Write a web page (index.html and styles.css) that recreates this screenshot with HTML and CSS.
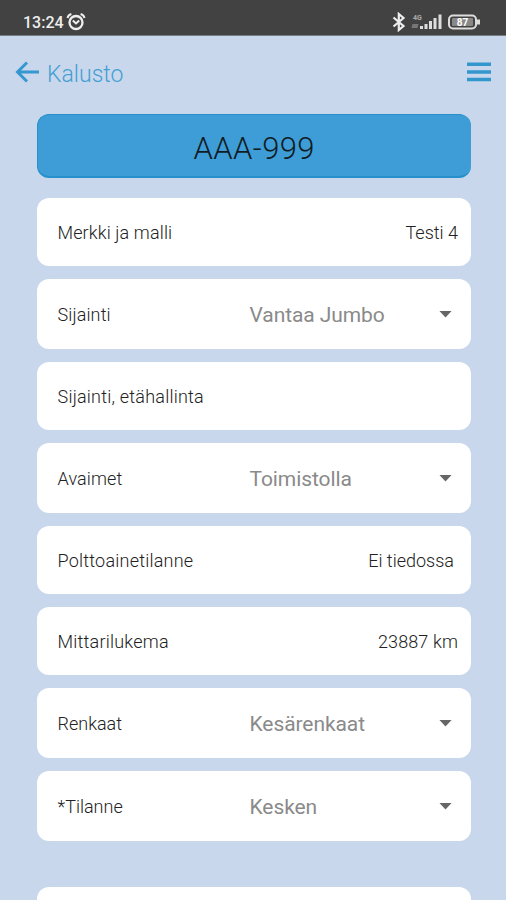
FILE: index.html
```html
<!DOCTYPE html>
<html lang="fi">
<head>
<meta charset="utf-8">
<title>Kalusto</title>
<link rel="stylesheet" href="styles.css">
</head>
<body>
<header class="status">
  <div class="clock"><span>13:24</span>
    <svg width="20" height="20" viewBox="0 0 20 20" fill="none" stroke="#eee"><circle cx="10" cy="10.5" r="6.5" stroke-width="2.300"/><path d="M1.500 6Q2 3 5.400 2M14.600 2Q18 3 18.500 6" stroke-width="2"/><path d="M6.800 8.500L10 11.500l3.200-3" stroke-width="2"/></svg>
  </div>
  <div class="indicators">
    <svg class="bluetooth" width="14" height="20" viewBox="0 0 14 20" fill="none" stroke="#eee" stroke-width="2.200"><path d="M1.500 5.500l10 8.500-4.700 4V2l4.700 4-10 8.500"/></svg>
    <svg class="signal" width="32" height="20" viewBox="0 0 32 20"><text class="net" x="2" y="8">4G</text><path d="M1.500 12h6l-1 4h-6z" fill="#777"/><path d="M9 14h3v3H9zM13.500 12h3v5h-3zM18 9h3v8h-3zM22.500 6h3v11h-3zM27.500 2.500h3V17h-3z" fill="#ddd"/></svg>
    <svg width="33" height="16" viewBox="0 0 33 16"><rect x="1" y="1.500" width="27" height="13" rx="4" fill="none" stroke="#ddd" stroke-width="2"/><path d="M29 5.500h3v5h-3z" fill="#ddd"/><rect x="4" y="4" width="21" height="8" rx="1" fill="#888"/><text class="charge" x="14.500" y="11.500" text-anchor="middle">87</text></svg>
  </div>
</header>
<nav class="bar">
  <a class="back"><svg width="24" height="22" viewBox="0 0 24 22" fill="none" stroke="#3598cf" stroke-width="3"><path d="M24 11H2.500M12 1.500L2.500 11l9.500 9.500"/></svg><span>Kalusto</span></a>
  <svg width="24" height="20" viewBox="0 0 24 20" fill="#3297cd"><path d="M0 .5h24v3.600H0zM0 8.200h24v3.600H0zM0 15.700h24v3.600H0z"/></svg>
</nav>
<main>
  <h1><span>AAA-999</span></h1>
  <section class="cards">
    <div class="card"><span class="label roomy">Merkki ja malli</span><span class="value">Testi 4</span></div>
    <div class="card pick"><span class="label roomy">Sijainti</span><span class="choice">Vantaa Jumbo</span><i class="caret"></i></div>
    <div class="card"><span class="label wide">Sijainti, etähallinta</span></div>
    <div class="card pick"><span class="label roomy">Avaimet</span><span class="choice">Toimistolla</span><i class="caret"></i></div>
    <div class="card"><span class="label wide">Polttoainetilanne</span><span class="value inset">Ei tiedossa</span></div>
    <div class="card"><span class="label wide">Mittarilukema</span><span class="value roomy">23887 km</span></div>
    <div class="card pick"><span class="label">Renkaat</span><span class="choice">Kesärenkaat</span><i class="caret"></i></div>
    <div class="card pick"><span class="label">*Tilanne</span><span class="choice">Kesken</span><i class="caret"></i></div>
    <div class="card next"></div>
  </section>
</main>
</body>
</html>
```
FILE: styles.css
```css
* { box-sizing: border-box; }
body { margin: 0; height: 900px; overflow: hidden; background: #c9d7ec; font-family: Roboto, "Liberation Sans", sans-serif; }
.status { height: 36px; padding: 8px 25px 0 23px; background: #424242; border-bottom: 1px solid #777b82; display: flex; justify-content: space-between; color: #eee; }
.clock { display: flex; align-items: center; height: 28px; gap: 2px; font-size: 16px; font-weight: 500; }
.clock svg { margin-top: -1px; }
.indicators { display: flex; align-items: center; height: 28px; }
.bluetooth { margin-right: 5px; }
.signal { margin-right: 5px; }
.net { font: 700 7px Roboto, sans-serif; fill: #aaa; }
.charge { font: 700 10px Roboto, sans-serif; fill: #fff; }
.bar { height: 78px; padding: 0 15px 6px; display: flex; align-items: center; justify-content: space-between; color: #459fd3; }
.back { display: flex; align-items: center; gap: 8px; font-size: 23px; font-weight: 300; }
.back span { padding-top: 4px; }
main { padding: 0 35px 0 36.500px; }
h1 { margin: 0 0 19.500px; height: 64px; border: solid #2590cb; border-width: 1px 0 2px 1px; border-radius: 12px; background: #3e9dd7; color: #101c24; display: flex; align-items: center; justify-content: center; font-size: 31px; font-weight: 300; letter-spacing: .4px; }
h1 span { padding-top: 5px; }
.cards { display: flex; flex-direction: column; gap: 13px; }
.card { flex: none; height: 68px; padding: 2px 13px 0 21px; background: #fff; border-radius: 12px; display: flex; align-items: center; justify-content: space-between; font-size: 18px; color: #222; }
.label, .value { font-weight: 300; white-space: nowrap; }
.roomy { letter-spacing: .12px; }
.wide { letter-spacing: .22px; }
.pick { height: 70px; display: grid; grid-template-columns: 192px 1fr auto; padding-right: 19px; }
.choice { font-size: 21px; letter-spacing: -.08px; color: #8a8a8a; }
.caret { width: 13px; height: 7px; background: #666; clip-path: polygon(0 0, 100% 0, 50% 100%); margin-top: -1px; }
.inset { margin-right: 4px; }
.next { height: 13.500px; margin-top: 33px; padding: 0; border-radius: 12px 12px 0 0; }
```
